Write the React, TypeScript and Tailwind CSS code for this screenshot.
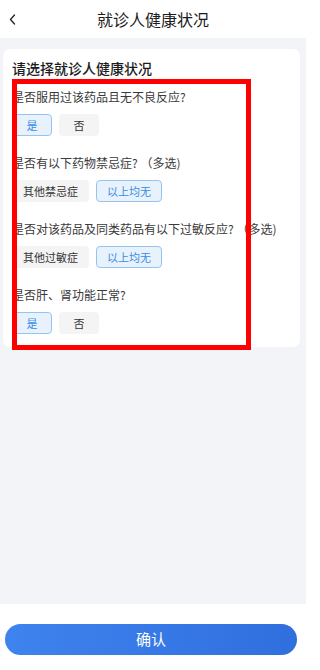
const font = { fontFamily: '"Noto Sans CJK SC", "Noto Sans", sans-serif' };

type Option = { label: string; selected: boolean };
type Question = { title: string; options: Option[] };

const questions: Question[] = [
  {
    title: "是否服用过该药品且无不良反应?",
    options: [
      { label: "是", selected: true },
      { label: "否", selected: false },
    ],
  },
  {
    title: "是否有以下药物禁忌症? （多选)",
    options: [
      { label: "其他禁忌症", selected: false },
      { label: "以上均无", selected: true },
    ],
  },
  {
    title: "是否对该药品及同类药品有以下过敏反应? （多选)",
    options: [
      { label: "其他过敏症", selected: false },
      { label: "以上均无", selected: true },
    ],
  },
  {
    title: "是否肝、肾功能正常?",
    options: [
      { label: "是", selected: true },
      { label: "否", selected: false },
    ],
  },
];

function Chip({ label, selected }: Option) {
  return (
    <button
      className={
        selected
          ? "flex h-[22px] min-w-[40px] items-center justify-center rounded-[4px] border border-[#93c5f0] bg-[#e7f2fd] px-[10px] text-[11px] text-[#3b8de2]"
          : "flex h-[22px] min-w-[40px] items-center justify-center rounded-[4px] border border-transparent bg-[#f4f4f5] px-[10px] text-[11px] text-[#333]"
      }
    >
      {label}
    </button>
  );
}

export default function App() {
  return (
    <div style={font} className="relative flex h-screen w-[306px] flex-col overflow-hidden bg-[#f3f4f8]">
      <header className="relative flex h-[38px] shrink-0 items-center justify-center bg-white">
        <svg className="absolute left-[9px] top-[14px]" width="7" height="11" viewBox="0 0 7 11" fill="none">
          <path d="M5.5 1 1.5 5.5 5.5 10" stroke="#222" strokeWidth="1.3" strokeLinecap="round" strokeLinejoin="round" />
        </svg>
        <h1 className="text-[16px] text-[#1c1c1c]">就诊人健康状况</h1>
      </header>

      <main className="flex-1 pt-[11px]">
        <section className="ml-[3px] mr-[6px] rounded-[7px] bg-white px-[9px] pb-[13px] pt-[9px]">
          <h2 className="text-[14px] font-medium leading-[20px] text-[#1c1c1c]">请选择就诊人健康状况</h2>
          <div className="mt-[9px] flex flex-col gap-[17px]">
            {questions.map((q) => (
              <div key={q.title}>
                <p className="whitespace-nowrap text-[12px] leading-[20px] text-[#3a3a3a]">{q.title}</p>
                <div className="mt-[7px] flex gap-[7px]">
                  {q.options.map((o) => (
                    <Chip key={o.label} {...o} />
                  ))}
                </div>
              </div>
            ))}
          </div>
        </section>
      </main>

      <footer className="flex h-[66px] shrink-0 items-start bg-white pl-[5px] pr-[9px] pt-[20px]">
        <button className="flex h-[31px] w-full items-center justify-center rounded-full bg-gradient-to-r from-[#3f83ee] to-[#2f6fde] text-[15px] text-white">
          确认
        </button>
      </footer>

      <div className="pointer-events-none absolute left-[12px] top-[79px] h-[271px] w-[239px] border-[5px] border-[#ff0000]" />
    </div>
  );
}
